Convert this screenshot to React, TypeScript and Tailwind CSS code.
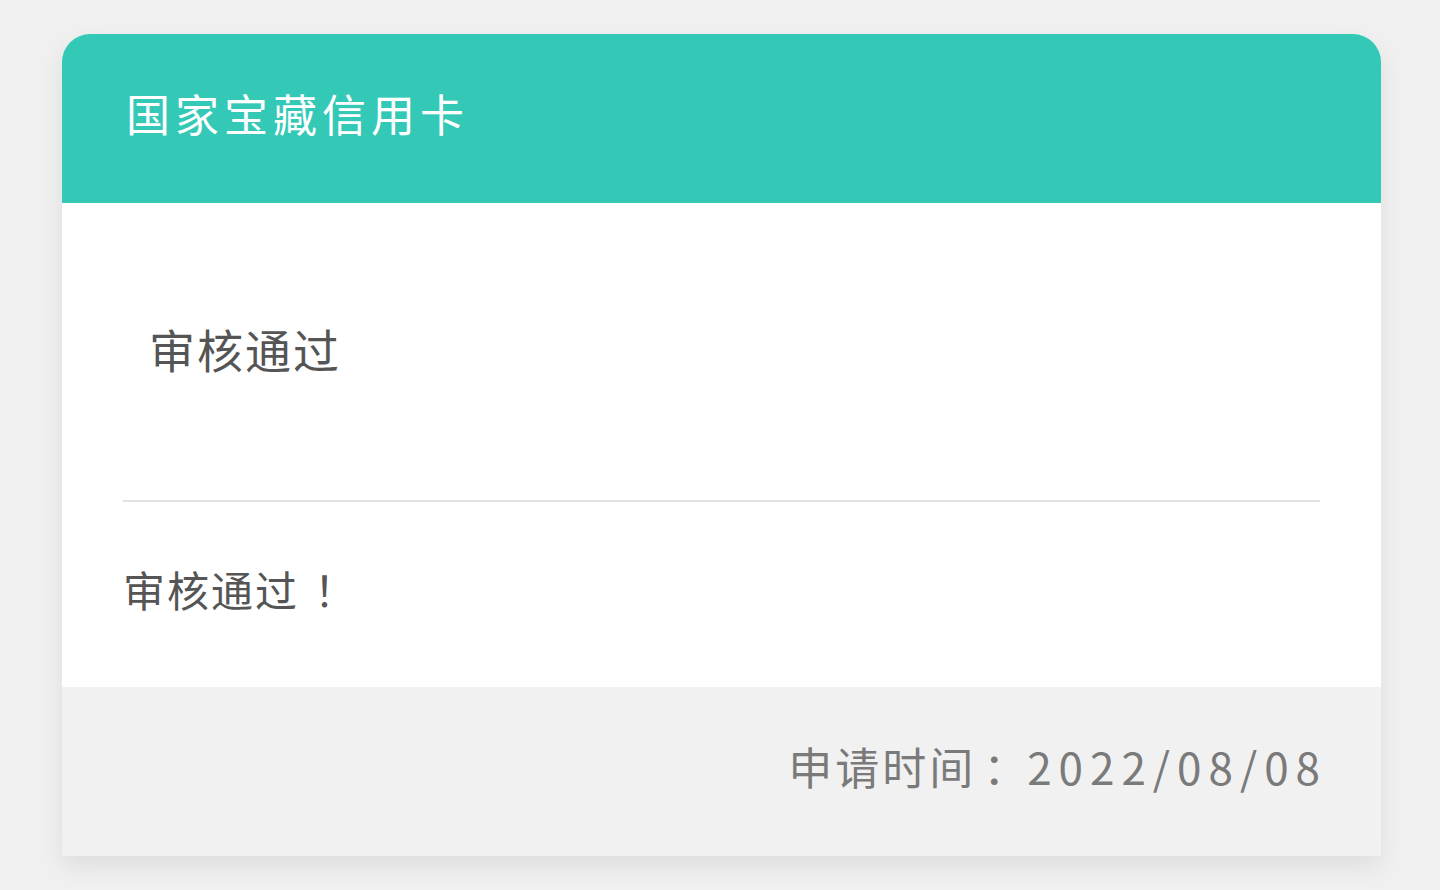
export default function App() {
  return (
    <div
      lang="zh-CN"
      className="min-h-[890px] w-full bg-[#f0f0f0] pt-[34px] pl-[62px]"
      style={{ fontFamily: '"Noto Sans CJK SC", "Noto Sans", sans-serif' }}
    >
      <div className="w-[1319px] overflow-hidden rounded-t-[28px] bg-white shadow-[0_10px_24px_rgba(0,0,0,0.08)]">
        <div className="flex h-[169px] items-center bg-[#33c9b6] pb-[12px] pl-[64px]">
          <span className="text-[44px] leading-none tracking-[5px] text-white">国家宝藏信用卡</span>
        </div>

        <div className="flex h-[297px] items-center pb-[8px] pl-[87px]">
          <span className="text-[46px] leading-none tracking-[2px] text-[#555555]">审核通过</span>
        </div>

        <div className="mx-[61px] h-[2px] bg-[#e2e2e2]" />

        <div className="flex h-[185px] items-center pb-[12px] pl-[61px]">
          <span className="whitespace-nowrap text-[42px] leading-none tracking-[2px] text-[#555555]">
            审核通过<span className="ml-[15px] inline-block w-[44px] text-center">！</span>
          </span>
        </div>

        <div className="flex h-[169px] items-center justify-end bg-[#f1f1f1] pb-[12px] pr-[61px]">
          <div className="flex items-center whitespace-nowrap text-[44px] leading-none text-[#7a7a7a]">
            <span className="tracking-[3px]">申请时间</span>
            <span className="flex w-[51px] justify-end">：</span>
            <span className="mr-[-7px] tracking-[7px]">2022/08/08</span>
          </div>
        </div>
      </div>
    </div>
  )
}
